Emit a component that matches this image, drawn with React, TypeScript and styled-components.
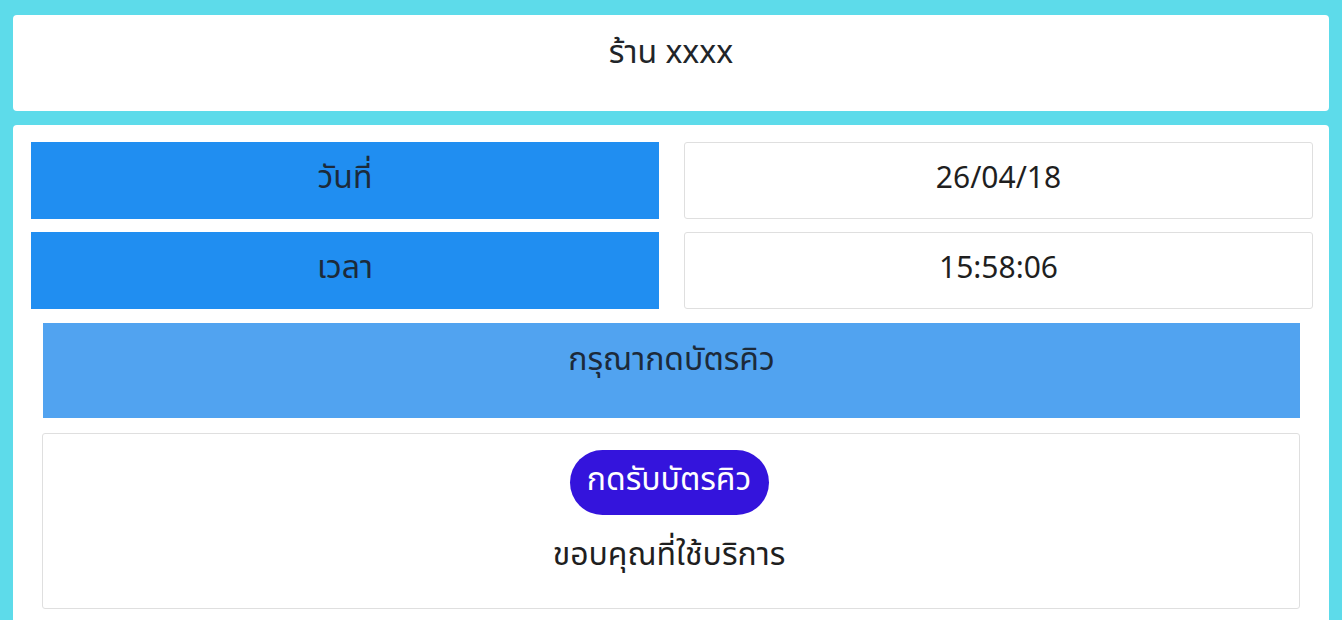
import React from "react";
import styled, { createGlobalStyle } from "styled-components";

const Global = createGlobalStyle`
  html, body { margin: 0; padding: 0; }
  body {
    background: #5ddbea;
    font-family: "Noto Sans Thai", "Noto Sans", "Open Sans", sans-serif;
    color: #212529;
  }
`;

const Page = styled.div`
  padding: 15px 13px 0 13px;
  display: flex;
  flex-direction: column;
  gap: 14px;
`;

const Card = styled.div`
  background: #fff;
  border-radius: 4px;
`;

const HeaderCard = styled(Card)`
  height: 96px;
  display: flex;
  justify-content: center;
  padding-top: 14px;
  box-sizing: border-box;
  font-size: 32px;
  line-height: 48px;
`;

const MainCard = styled(Card)`
  padding: 17px 16px 20px 18px;
  border-bottom-left-radius: 0;
  border-bottom-right-radius: 0;
`;

const InfoGrid = styled.div`
  display: grid;
  grid-template-columns: 628px 1fr;
  grid-auto-rows: 77px;
  column-gap: 25px;
  row-gap: 13px;
`;

const Label = styled.div`
  background: #208ef1;
  display: flex;
  align-items: center;
  justify-content: center;
  font-size: 32px;
  color: #1c2a3a;
  padding-bottom: 6px;
  box-sizing: border-box;
`;

const Value = styled.div`
  border: 1px solid #dfdfdf;
  border-radius: 3px;
  box-sizing: border-box;
  display: flex;
  align-items: center;
  justify-content: center;
  font-size: 30px;
  color: #1f1f1f;
  padding-bottom: 4px;
`;

const Inner = styled.div`
  margin: 14px 13px 0 11px;
  display: flex;
  flex-direction: column;
  gap: 15px;
`;

const Band = styled.div`
  background: #51a3f0;
  height: 95px;
  margin-left: 1px;
  display: flex;
  justify-content: center;
  padding-top: 13px;
  box-sizing: border-box;
  font-size: 32px;
  line-height: 48px;
  color: #1c2a3a;
`;

const TicketBox = styled.div`
  border: 1px solid #dfdfdf;
  border-radius: 3px;
  height: 176px;
  box-sizing: border-box;
  display: flex;
  flex-direction: column;
  align-items: center;
  padding: 16px 4px 0 0;
`;

const TicketButton = styled.button`
  background: #3414dc;
  color: #fff;
  border: none;
  border-radius: 33px;
  height: 65px;
  width: 199px;
  font-family: inherit;
  font-size: 32px;
  display: flex;
  align-items: center;
  justify-content: center;
  padding: 0 0 6px 0;
  cursor: pointer;
  white-space: nowrap;
`;

const Thanks = styled.div`
  margin-top: 16px;
  font-size: 32px;
  line-height: 48px;
  color: #1f1f1f;
`;

export default function App() {
  return (
    <>
      <Global />
      <Page>
        <HeaderCard>ร้าน xxxx</HeaderCard>
        <MainCard>
          <InfoGrid>
            <Label>วันที่</Label>
            <Value>26/04/18</Value>
            <Label>เวลา</Label>
            <Value>15:58:06</Value>
          </InfoGrid>
          <Inner>
            <Band>กรุณากดบัตรคิว</Band>
            <TicketBox>
              <TicketButton>กดรับบัตรคิว</TicketButton>
              <Thanks>ขอบคุณที่ใช้บริการ</Thanks>
            </TicketBox>
          </Inner>
        </MainCard>
      </Page>
    </>
  );
}
